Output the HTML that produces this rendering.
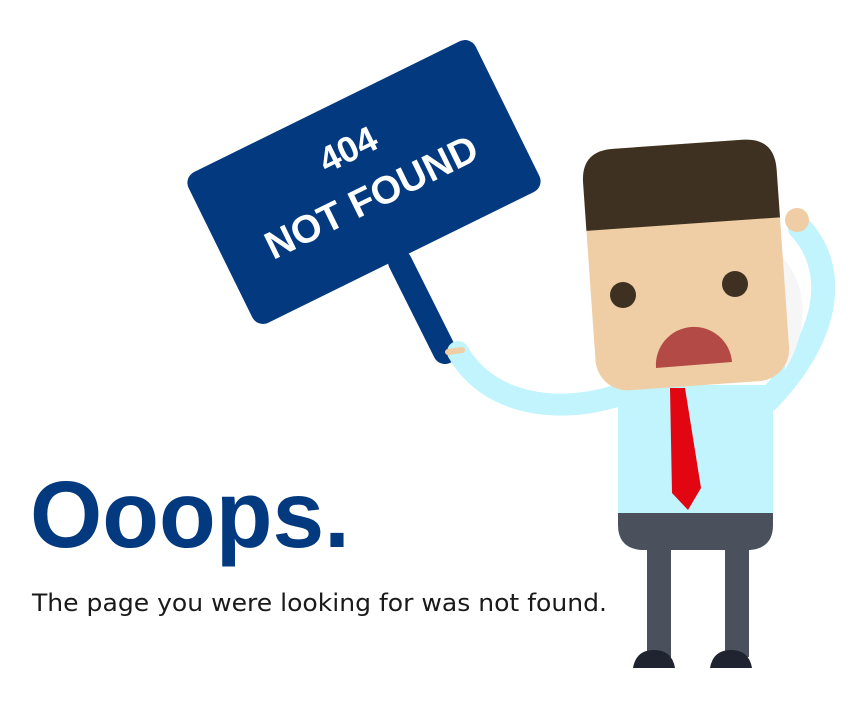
<!DOCTYPE html>
<html><head><meta charset="utf-8"><style>
html,body{margin:0;padding:0;background:#fff;width:860px;height:717px;overflow:hidden}
</style></head><body>
<svg width="860" height="717" viewBox="0 0 860 717" xmlns="http://www.w3.org/2000/svg">
<line x1="400" y1="262" x2="445" y2="352" stroke="#02397f" stroke-width="24" stroke-linecap="round"/>
<path d="M625 393 C565 415 490 408 458 352" fill="none" stroke="#c2f4fd" stroke-width="22" stroke-linecap="round"/>
<path d="M448 352 L462 350" stroke="#efcea6" stroke-width="6" stroke-linecap="round"/>
<g transform="rotate(-26.2 364 182)">
<rect x="204" y="98" width="320" height="168" rx="12" fill="#02397f"/>
<text x="364" y="158" text-anchor="middle" font-family="Liberation Sans, sans-serif" font-weight="bold" font-size="36" fill="#fff">404</text>
<text x="364" y="212" text-anchor="middle" font-family="Liberation Sans, sans-serif" font-weight="bold" font-size="39" fill="#fff">NOT FOUND</text>
</g>
<path d="M768 400 C835 330 835 265 800 228" fill="none" stroke="#c2f4fd" stroke-width="24" stroke-linecap="round"/>
<path d="M775 250 C810 280 810 330 785 370 L780 250Z" fill="#f6f6f6"/>
<circle cx="797" cy="220" r="12" fill="#efcea6"/>
<path d="M618 513 H773 V525 Q773 548 750 550 H641 Q618 548 618 525Z" fill="#4a505c"/>
<rect x="647" y="545" width="24" height="112" fill="#4a505c"/>
<rect x="725" y="545" width="24" height="112" fill="#4a505c"/>
<path d="M633 668 Q636 650 654 650 Q672 650 675 668Z" fill="#1f2430"/>
<path d="M710 668 Q713 650 731 650 Q749 650 752 668Z" fill="#1f2430"/>
<rect x="618" y="385" width="155" height="128" fill="#c2f4fd"/>
<path d="M670 388 H685 L701 488 L688 510 L672 493Z" fill="#e20613"/>
<g transform="rotate(-4 686 264)">
<rect x="589" y="144" width="194" height="242" rx="32" fill="#efcea6"/>
<path d="M589 224 V176 Q589 144 621 144 H751 Q783 144 783 176 V224Z" fill="#3f3122"/>
</g>
<circle cx="623" cy="295" r="13" fill="#3f3122"/>
<circle cx="735" cy="284" r="13" fill="#3f3122"/>
<path d="M656 368 A38 38 0 0 1 732 362Z" fill="#b34a45"/>
<text x="30" y="547" font-family="Liberation Sans, sans-serif" font-weight="bold" font-size="95" fill="#02397f" textLength="320" lengthAdjust="spacingAndGlyphs">Ooops.</text>
<text x="32" y="611" font-family="DejaVu Sans, sans-serif" font-size="24" fill="#1a1a1a" textLength="575" lengthAdjust="spacingAndGlyphs">The page you were looking for was not found.</text>
</svg>
</body></html>
